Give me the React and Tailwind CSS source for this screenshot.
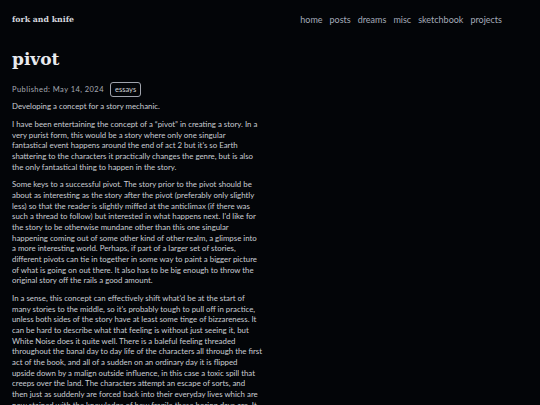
import React from "react";

const P2 = [
  "I have been entertaining the concept of a “pivot” in creating a story. In a",
  "very purist form, this would be a story where only one singular",
  "fantastical event happens around the end of act 2 but it's so Earth",
  "shattering to the characters it practically changes the genre, but is also",
  "the only fantastical thing to happen in the story.",
];
const P3 = [
  "Some keys to a successful pivot. The story prior to the pivot should be",
  "about as interesting as the story after the pivot (preferably only slightly",
  "less) so that the reader is slightly miffed at the anticlimax (if there was",
  "such a thread to follow) but interested in what happens next. I'd like for",
  "the story to be otherwise mundane other than this one singular",
  "happening coming out of some other kind of other realm, a glimpse into",
  "a more interesting world. Perhaps, if part of a larger set of stories,",
  "different pivots can tie in together in some way to paint a bigger picture",
  "of what is going on out there. It also has to be big enough to throw the",
  "original story off the rails a good amount.",
];
const P4 = [
  "In a sense, this concept can effectively shift what'd be at the start of",
  "many stories to the middle, so it's probably tough to pull off in practice,",
  "unless both sides of the story have at least some tinge of bizzareness. It",
  "can be hard to describe what that feeling is without just seeing it, but",
  "White Noise does it quite well. There is a baleful feeling threaded",
  "throughout the banal day to day life of the characters all through the first",
  "act of the book, and all of a sudden on an ordinary day it is flipped",
  "upside down by a malign outside influence, in this case a toxic spill that",
  "creeps over the land. The characters attempt an escape of sorts, and",
  "then just as suddenly are forced back into their everyday lives which are",
  "now stained with the knowledge of how fragile these boring days are. It",
];

function Para({ lines }) {
  return (
    <p className="mb-[7px] whitespace-nowrap">
      {lines.map((l, i) => (
        <React.Fragment key={i}>
          {l}
          {i < lines.length - 1 && <br />}
        </React.Fragment>
      ))}
    </p>
  );
}

export default function App() {
  const sans = { fontFamily: "Lato, 'Open Sans', sans-serif" };
  return (
    <div className="h-[405px] w-[540px] overflow-hidden bg-[#030508] text-[#c9ccd3]" style={sans}>
      <header className="flex items-center justify-between h-[40px] pl-[12px] pr-[38px]">
        <div className="text-[7.8px] font-bold text-[#d4d7de] [font-family:'DejaVu_Serif',serif]">
          fork and knife
        </div>
        <nav className="flex gap-[7px] text-[9px] text-[#a3abb9]">
          <span>home</span>
          <span>posts</span>
          <span>dreams</span>
          <span>misc</span>
          <span>sketchbook</span>
          <span>projects</span>
        </nav>
      </header>
      <main className="px-[12px]">
        <h1 className="mt-[8px] text-[17px] leading-[22px] font-bold text-[#e8eaee] [font-family:'DejaVu_Serif',serif]">
          pivot
        </h1>
        <div className="mt-[12px] flex items-center gap-[6px] text-[7.5px] text-[#a6aab2]">
          <span className="tracking-[0.45px]">Published: May 14, 2024</span>
          <span className="rounded-[3px] border border-[#a0a4ad] px-[4px] py-[1px] text-[#d0d3d9]">essays</span>
        </div>
        <div className="mt-[4px] text-[7.85px] leading-[10.67px]">
          <p className="mb-[7px]">Developing a concept for a story mechanic.</p>
          <Para lines={P2} />
          <Para lines={P3} />
          <Para lines={P4} />
        </div>
      </main>
    </div>
  );
}
